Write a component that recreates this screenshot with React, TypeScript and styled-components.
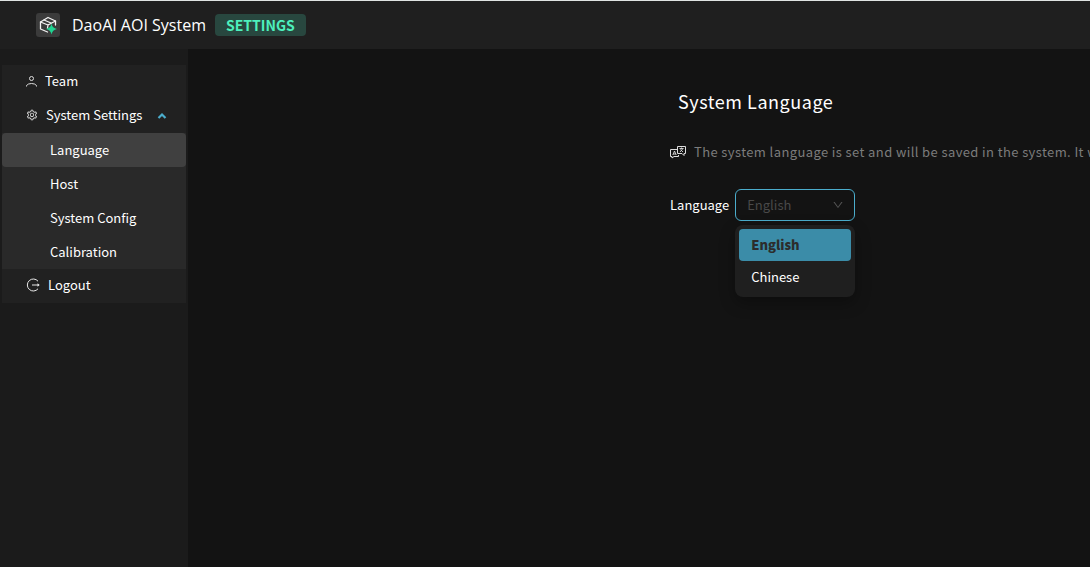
import React, { useState } from "react";
import styled, { createGlobalStyle } from "styled-components";
import { AiOutlineDown, AiOutlineSetting } from "react-icons/ai";

const GlobalStyle = createGlobalStyle`
  *, *::before, *::after { box-sizing: border-box; }
  body {
    margin: 0;
    background: #131313;
    color: #fff;
    font: 14px/20px "Noto Sans CJK SC", "Noto Sans", sans-serif;
  }
  button, select { font: inherit; }
`;

const Shell = styled.div`
  display: flex;
  flex-direction: column;
  min-height: 100vh;
  border-top: 1px solid #dfe3e2;
  overflow: hidden;
`;

const Header = styled.header`
  display: flex;
  align-items: center;
  height: 48px;
  padding-left: 36px;
  background: #1f1f1f;
`;

const Brand = styled.h1`
  margin: 0 9px 0 12px;
  font: 400 16px/24px "Open Sans", sans-serif;
`;

const Tag = styled.span`
  padding: 0 11px;
  border-radius: 4px;
  background: #28473f;
  color: #4df0bd;
  font-weight: 700;
  line-height: 22px;
`;

const Body = styled.div`
  display: flex;
  flex: 1;
`;

const Sidebar = styled.nav`
  flex: 0 0 188px;
  padding: 16px 2px 0;
  background: #1b1b1b;
`;

const MenuList = styled.ul<{ $nested?: boolean }>`
  margin: 0;
  padding: 0;
  list-style: none;
  background: ${(p) => (p.$nested ? "#292929" : "#212121")};
`;

const MenuButton = styled.button<{ $nested?: boolean; $selected?: boolean }>`
  display: flex;
  align-items: center;
  gap: 8px;
  width: 100%;
  height: 34px;
  padding: 0 19px ${(p) => (p.$nested ? 0 : 2)}px ${(p) => (p.$nested ? 48 : 24)}px;
  border: 0;
  border-radius: 4px;
  background: ${(p) => (p.$selected ? "#404040" : "transparent")};
  color: #fff;
  font-size: 13px;
  text-align: left;
  white-space: nowrap;
  cursor: pointer;

  svg { flex: none; }
  svg:last-child:not(:first-child) { margin-left: auto; }
`;

const Content = styled.main`
  flex: 1;
  min-width: 0;
  padding: 38px 0 0 482px;
`;

const Title = styled.h2`
  margin: 0 0 26px;
  padding-left: 8px;
  font-size: 18px;
  font-weight: 400;
  line-height: 28px;
  letter-spacing: 0.03em;
`;

const Hint = styled.p`
  display: flex;
  align-items: center;
  gap: 8px;
  margin: 0 0 26px;
  color: #7c7c7c;
  font-size: 13px;
  line-height: 22px;
  letter-spacing: 0.03em;
  white-space: nowrap;

  svg { flex: none; }
`;

const Field = styled.div`
  display: flex;
  align-items: center;
  gap: 6px;
  font-size: 13px;
`;

const SelectBox = styled.div`
  position: relative;
  width: 120px;

  > svg {
    position: absolute;
    top: 10px;
    right: 11px;
    color: #555;
    pointer-events: none;
  }
`;

const Select = styled.select`
  display: block;
  width: 100%;
  height: 32px;
  padding: 0 11px;
  border: 1px solid #4badcc;
  border-radius: 6px;
  outline: 0;
  appearance: none;
  background: #131313;
  color: #494949;
`;

const Dropdown = styled.div`
  position: absolute;
  top: 36px;
  left: 0;
  width: 100%;
  padding: 4px;
  border-radius: 8px;
  background: #1f1f1f;
  box-shadow: 0 6px 16px rgba(0, 0, 0, 0.3);
`;

const Option = styled.button<{ $active: boolean }>`
  display: block;
  width: 100%;
  height: 32px;
  padding: 0 12px;
  border: 0;
  border-radius: 4px;
  background: ${(p) => (p.$active ? "#3b8ca8" : "transparent")};
  color: ${(p) => (p.$active ? "#2c2c2c" : "#fff")};
  font-weight: ${(p) => (p.$active ? 900 : 400)};
  text-align: left;
`;

const LogoIcon = () => (
  <svg width="24" height="24" viewBox="0 0 24 24" fill="none" aria-hidden="true">
    <rect width="24" height="24" rx="3" fill="#3b3b3b" />
    <g stroke="#f2f2f2" strokeWidth="1.3" strokeLinejoin="round" strokeLinecap="round">
      <path d="M11.500 19 4.500 16V9l7.500-4.500L19.500 8v4" />
      <path d="M4.500 9l7.500 3 7.500-4M12 12l-.5 3" />
      <path d="M8 7l7 3" />
    </g>
    <path d="M15.500 10.500q.8 4.700 5.500 5.500-4.700.8-5.500 5.500-.8-4.700-5.500-5.500 4.700-.8 5.500-5.500Z" fill="#20d492" />
  </svg>
);

const TeamIcon = () => (
  <svg width="11" height="12" viewBox="0 0 11 12" fill="none" stroke="#ddd" aria-hidden="true">
    <circle cx="5.500" cy="3.500" r="2" />
    <path d="M.5 11.500V10.500q1.500-2 5-2t5 2v1" />
  </svg>
);

const LogoutIcon = () => (
  <svg width="14" height="14" viewBox="0 0 14 14" fill="none" stroke="#e8e8e8" aria-hidden="true">
    <path d="M12 3.200a6 6 0 1 0 0 7.600M6 7h7" />
    <path d="m11.500 5.300 2.200 1.700-2.200 1.700Z" fill="#e8e8e8" stroke="none" />
  </svg>
);

const CaretIcon = () => (
  <svg width="10" height="8" viewBox="0 0 10 8" fill="none" stroke="#4badcc" strokeWidth="2.200" aria-hidden="true">
    <path d="m1.500 7 3.500-3.500L8.500 7" />
  </svg>
);

const TranslateIcon = () => (
  <svg width="16" height="14" viewBox="0 0 16 14" fill="none" stroke="#ddd" aria-hidden="true">
    <path d="M7 4.500H.5v7H2v1.500l2-1.500h4.500V10" />
    <path d="M7.500 1.500h8v7H14v2l-2-2H7.500Z" />
    <path d="m2.800 10 1.700-4 1.700 4M3.300 9h2.400M9.500 3.500h4M11.500 2.500v1M10 7l3-3.500M10.500 4.500 13 7" strokeWidth=".9" />
  </svg>
);

const settingsPages = ["Language", "Host", "System Config", "Calibration"];
const languages = ["English", "Chinese"];

export default function App() {
  const [page, setPage] = useState("Language");
  const [language, setLanguage] = useState("English");

  return (
    <>
      <GlobalStyle />
      <Shell>
        <Header>
          <LogoIcon />
          <Brand>DaoAI AOI System</Brand>
          <Tag>SETTINGS</Tag>
        </Header>
        <Body>
          <Sidebar aria-label="Settings">
            <MenuList>
              <li>
                <MenuButton type="button"><TeamIcon />Team</MenuButton>
              </li>
              <li>
                <MenuButton type="button" aria-expanded="true">
                  <AiOutlineSetting size={12} color="#ddd" />System Settings<CaretIcon />
                </MenuButton>
                <MenuList $nested>
                  {settingsPages.map((name) => (
                    <li key={name}>
                      <MenuButton type="button" $nested $selected={name === page} onClick={() => setPage(name)}>
                        {name}
                      </MenuButton>
                    </li>
                  ))}
                </MenuList>
              </li>
              <li>
                <MenuButton type="button"><LogoutIcon />Logout</MenuButton>
              </li>
            </MenuList>
          </Sidebar>
          <Content>
            <Title>System Language</Title>
            <Hint>
              <TranslateIcon />
              The system language is set and will be saved in the system. It will
            </Hint>
            <Field>
              <label htmlFor="language">Language</label>
              <SelectBox>
                <Select id="language" value={language} onChange={(e) => setLanguage(e.target.value)}>
                  {languages.map((name) => <option key={name}>{name}</option>)}
                </Select>
                <AiOutlineDown size={12} />
                <Dropdown role="listbox" aria-label="Language">
                  {languages.map((name) => (
                    <Option
                      key={name}
                      type="button"
                      role="option"
                      aria-selected={name === language}
                      $active={name === language}
                      onClick={() => setLanguage(name)}
                    >
                      {name}
                    </Option>
                  ))}
                </Dropdown>
              </SelectBox>
            </Field>
          </Content>
        </Body>
      </Shell>
    </>
  );
}
